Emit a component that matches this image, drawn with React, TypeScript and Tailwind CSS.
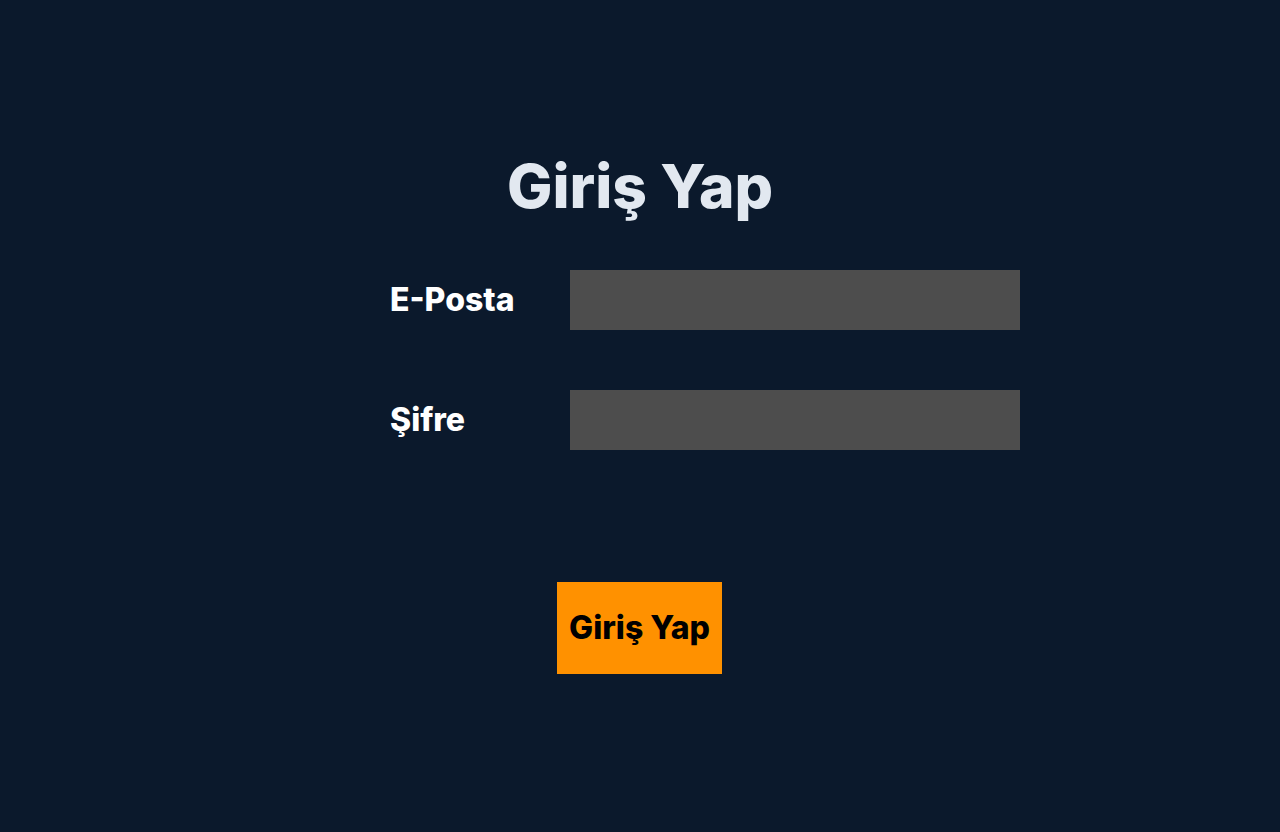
export default function App() {
  return (
    <div className="min-h-screen w-full bg-[#0b192c] font-['Inter',sans-serif] flex flex-col items-center">
      <h1 className="mt-[150px] text-[60.5px] leading-[72px] font-extrabold text-[#e2e8f0]">Giriş Yap</h1>
      <form className="mt-[48px] ml-[130px] w-[630px] flex flex-col gap-[60px]" onSubmit={(e) => e.preventDefault()}>
        <label className="flex items-center justify-between">
          <span className="text-[32px] font-extrabold text-white">E-Posta</span>
          <input type="email" className="w-[450px] h-[60px] bg-[#4d4d4d] text-white px-3 outline-none" />
        </label>
        <label className="flex items-center justify-between">
          <span className="text-[32px] font-extrabold text-white">Şifre</span>
          <input type="password" className="w-[450px] h-[60px] bg-[#4d4d4d] text-white px-3 outline-none" />
        </label>
      </form>
      <button className="mt-[132px] mr-[1px] w-[165px] h-[92px] bg-[#ff9100] text-black text-[32px] font-extrabold">Giriş Yap</button>
    </div>
  );
}
